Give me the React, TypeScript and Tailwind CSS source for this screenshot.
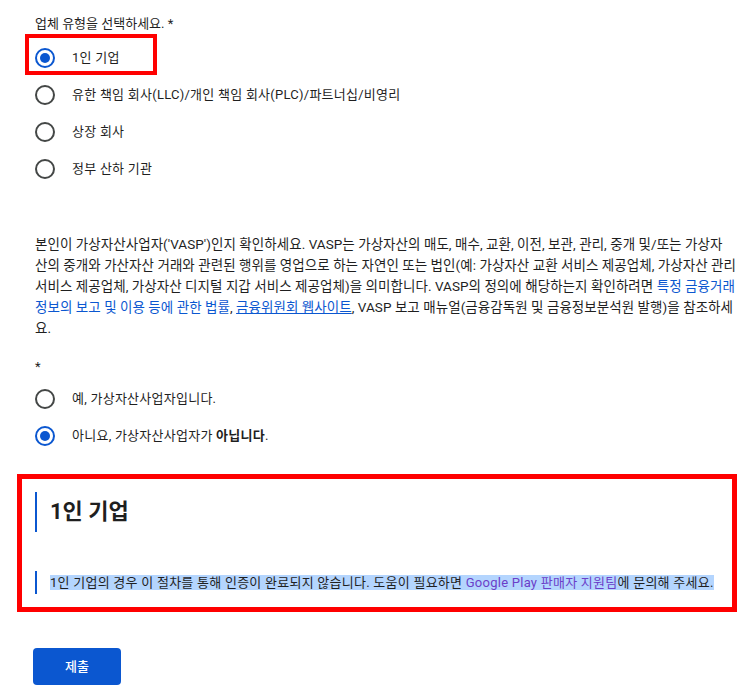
import React from "react";

function Radio({ checked }: { checked?: boolean }) {
  return checked ? (
    <span className="flex h-5 w-5 shrink-0 items-center justify-center rounded-full border-2 border-[#0b57d0]">
      <span className="h-[10px] w-[10px] rounded-full bg-[#0b57d0]" />
    </span>
  ) : (
    <span className="block h-5 w-5 shrink-0 rounded-full border-2 border-[#444746]" />
  );
}

function Option({ checked, children }: { checked?: boolean; children: React.ReactNode }) {
  return (
    <div className="flex h-[37px] items-center">
      <div className="flex w-[37px] items-center">
        <Radio checked={checked} />
      </div>
      <div className="tracking-[0.25px]">{children}</div>
    </div>
  );
}

export default function App() {
  return (
    <div
      className="min-h-[694px] w-[756px] bg-white text-[13px] leading-[20px] text-[#1f1f1f]"
      style={{ fontFamily: 'Roboto, "Noto Sans CJK KR", sans-serif' }}
    >
      <div className="pl-[35px] pt-[14px]">
        <div>업체 유형을 선택하세요. *</div>
        <div className="relative mt-[5px]">
          <Option checked>1인 기업</Option>
          <div className="pointer-events-none absolute left-[-10px] top-[-5px] h-[41px] w-[132px] border-4 border-[#ff0000]" />
          <Option>유한 책임 회사(LLC)/개인 책임 회사(PLC)/파트너십/비영리</Option>
          <Option>상장 회사</Option>
          <Option>정부 산하 기관</Option>
        </div>

        <p className="mt-[47px] w-[718px] text-[13.5px] leading-[21px] tracking-[0.05px]">
          본인이 가상자산사업자('VASP')인지 확인하세요. VASP는 가상자산의 매도, 매수, 교환, 이전, 보관, 관리, 중개 및/또는 가상자
          <br />
          산의 중개와 가산자산 거래와 관련된 행위를 영업으로 하는 자연인 또는 법인(예: 가상자산 교환 서비스 제공업체, 가상자산 관리
          <br />
          서비스 제공업체, 가상자산 디지털 지갑 서비스 제공업체)을 의미합니다. VASP의 정의에 해당하는지 확인하려면{" "}
          <a className="text-[#0b57d0]">
            특정 금융거래
            <br />
            정보의 보고 및 이용 등에 관한 법률
          </a>
          , <a className="text-[#0b57d0] underline">금융위원회 웹사이트</a>, VASP 보고 매뉴얼(금융감독원 및 금융정보분석원 발행)을 참조하세
          <br />
          요.
        </p>

        <div className="mt-[18px]">*</div>
        <div className="mt-[3px]">
          <Option>예, 가상자산사업자입니다.</Option>
          <Option checked>
            아니요, 가상자산사업자가 <b className="font-bold">아닙니다</b>.
          </Option>
        </div>
      </div>

      <div className="ml-[17px] mt-[20px] w-[720px] border-[5px] border-[#ff0000] px-[13px] pb-[13px] pt-[13px]">
        <div className="flex h-[40px] items-center border-l-2 border-[#0b57d0] pl-[13px]">
          <h2 className="text-[22px] font-bold leading-[28px] text-[#1f1f1f]">1인 기업</h2>
        </div>
        <div className="mt-[39px] flex h-[23px] items-center border-l-2 border-[#0b57d0] pl-[13px]">
          <p className="tracking-[0.25px]">
            <span className="bg-[#b4d5fe]">
              1인 기업의 경우 이 절차를 통해 인증이 완료되지 않습니다. 도움이 필요하면{" "}
              <a className="text-[#6b3fc9]">Google Play 판매자 지원팀</a>에 문의해 주세요.
            </span>
          </p>
        </div>
      </div>

      <div className="pl-[33px] pt-[36px]">
        <button className="h-[37px] w-[88px] rounded-[4px] bg-[#0b57d0] text-[13px] font-medium text-white">
          제출
        </button>
      </div>
    </div>
  );
}
